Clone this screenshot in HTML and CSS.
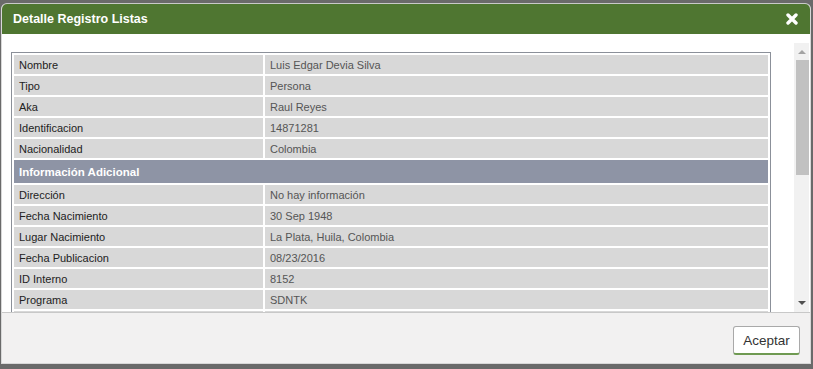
FILE: index.html
```html
<!DOCTYPE HTML>
<html>

<head>
    <title>Detalle Registro Listas</title>
    <link rel="stylesheet" href="styles.css">
</head>

<body>
    <div class="modal">
        <div class="modal-header">
            <span class="modal-title">Detalle Registro Listas</span>
            <span class="modal-close">
                <svg width="12" height="12" viewBox="0 0 12 12">
                    <path d="M2 2 L10 10 M10 2 L2 10" stroke="#fff" stroke-width="3.4" stroke-linecap="round" />
                </svg>
            </span>
        </div>
        <div class="modal-body">
            <div class="scroll-area">
                <table class="detail">
                    <tr><td class="lbl">Nombre</td><td class="val">Luis Edgar Devia Silva</td></tr>
                    <tr><td class="lbl">Tipo</td><td class="val">Persona</td></tr>
                    <tr><td class="lbl">Aka</td><td class="val">Raul Reyes</td></tr>
                    <tr><td class="lbl">Identificacion</td><td class="val">14871281</td></tr>
                    <tr><td class="lbl">Nacionalidad</td><td class="val">Colombia</td></tr>
                    <tr><td class="section" colspan="2">Información Adicional</td></tr>
                    <tr><td class="lbl">Dirección</td><td class="val">No hay información</td></tr>
                    <tr><td class="lbl">Fecha Nacimiento</td><td class="val">30 Sep 1948</td></tr>
                    <tr><td class="lbl">Lugar Nacimiento</td><td class="val">La Plata, Huila, Colombia</td></tr>
                    <tr><td class="lbl">Fecha Publicacion</td><td class="val">08/23/2016</td></tr>
                    <tr><td class="lbl">ID Interno</td><td class="val">8152</td></tr>
                    <tr><td class="lbl">Programa</td><td class="val">SDNTK</td></tr>
                    <tr><td class="lbl">Lista</td><td class="val">OFAC</td></tr>
                </table>
            </div>
            <div class="scrollbar">
                <span class="arrow up"></span>
                <span class="thumb"></span>
                <span class="arrow down"></span>
            </div>
        </div>
        <div class="modal-footer">
            <button type="button" class="btn">Aceptar</button>
        </div>
    </div>
</body>

</html>
```

FILE: styles.css
```css
html,
body {
    margin: 0;
    padding: 0;
}

body {
    background: #6a6a6a;
    font-family: "Liberation Sans", Arial, sans-serif;
    height: 369px;
    overflow: hidden;
}

.modal {
    margin: 3px 0 0 1px;
    width: 808px;
    height: 359px;
    border: 1px solid #d8d8d8;
    border-top-color: #c9c9c9;
    border-radius: 6px 6px 0 0;
    background: #fff;
    display: flex;
    flex-direction: column;
    overflow: hidden;
}

.modal-header {
    background: #4f7631;
    height: 30px;
    display: flex;
    align-items: center;
    justify-content: space-between;
    padding: 0 12px 0 11px;
    flex-shrink: 0;
}

.modal-title {
    color: #fff;
    font-weight: bold;
    font-size: 12.5px;
}

.modal-close {
    display: flex;
    margin-top: -1px;
}

/* body: table area + scrollbar */
.modal-body {
    margin-top: 9px;
    height: 269px;
    display: flex;
    flex-shrink: 0;
}

.scroll-area {
    flex: 1;
    overflow: hidden;
    padding: 9px 22px 0 9px;
}

.scrollbar {
    width: 15px;
    margin-right: 1px;
    background: #f1f1f1;
    display: flex;
    flex-direction: column;
    align-items: flex-end;
}

.arrow {
    width: 15px;
    height: 16px;
    display: flex;
    justify-content: center;
    align-items: center;
}

.arrow::before {
    content: "";
    border-left: 4px solid transparent;
    border-right: 4px solid transparent;
}

.arrow.up::before {
    border-bottom: 4px solid #a3a3a3;
    margin-top: 2px;
}

.arrow.down {
    margin-top: auto;
}

.arrow.down::before {
    border-top: 4px solid #505050;
    margin-bottom: 2px;
}

.thumb {
    width: 13px;
    height: 115px;
    background: #c1c1c1;
    margin-top: 1px;
}

.detail {
    width: 760px;
    border: 1px solid #8b9099;
    border-collapse: separate;
    border-spacing: 2px;
    font-size: 11px;
}

.detail td {
    background: #d8d8d8;
    height: 19px;
    padding: 0 5px;
    box-sizing: border-box;
}

.detail .lbl {
    width: 249px;
    color: #222;
}

.detail .val {
    color: #555;
}

.detail .section {
    background: #8e94a5;
    color: #fff;
    font-weight: bold;
    height: 23px;
    font-size: 11.5px;
}

.modal-footer {
    flex: 1;
    background: #f2f1f1;
    border-top: 1px solid #c8c8c8;
    display: flex;
    justify-content: flex-end;
    align-items: flex-start;
    padding: 13px 10px 0 0;
}

.btn {
    font-family: "Liberation Sans", Arial, sans-serif;
    font-size: 13.5px;
    color: #333;
    background: #fff;
    border: 1px solid #a9a9a9;
    border-bottom: 2px solid #6f9a52;
    border-radius: 3px;
    width: 67px;
    height: 29px;
    padding: 0;
}
```
